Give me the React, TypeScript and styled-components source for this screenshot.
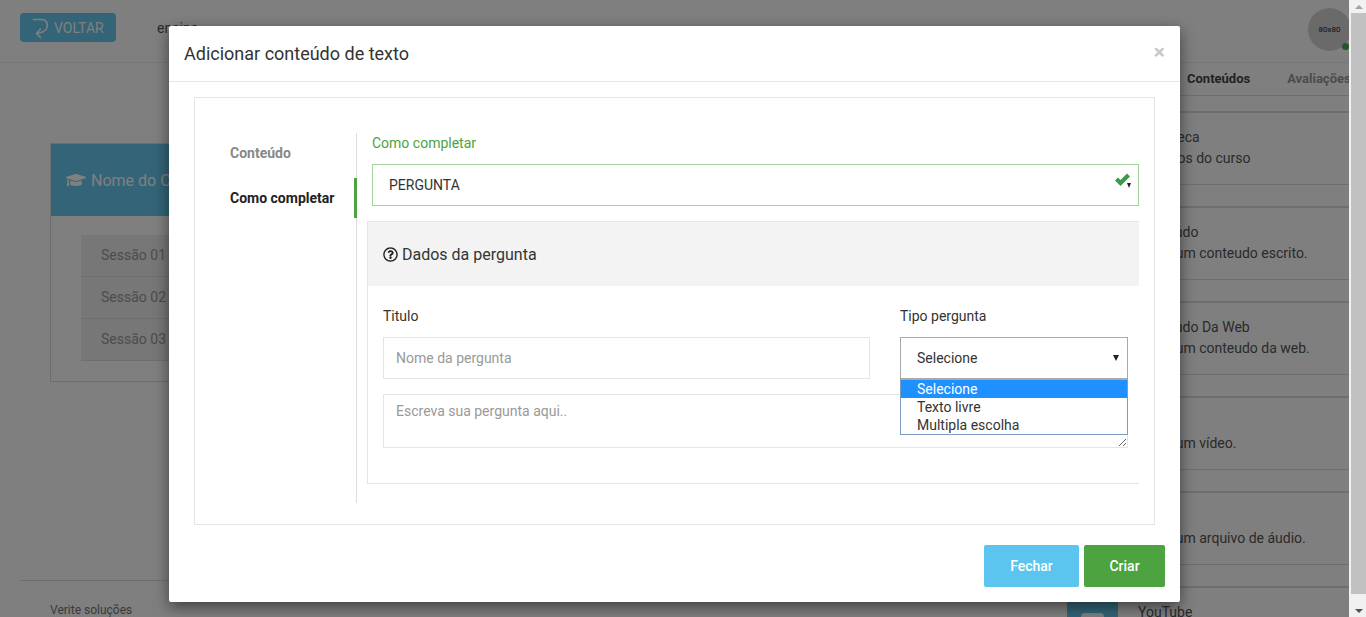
import styled, { createGlobalStyle } from "styled-components";
import { FaGraduationCap, FaRegQuestionCircle } from "react-icons/fa";

const GlobalStyle = createGlobalStyle`
  html, body {
    margin: 0;
    height: 617px;
    overflow: hidden;
    font-family: Roboto, "Liberation Sans", sans-serif;
    font-size: 14px;
    color: #333;
    background: #fff;
  }
  * { box-sizing: border-box; }
`;

const Shell = styled.div`
  display: flex;
  width: 1366px;
  height: 617px;
`;

const Viewport = styled.div`
  position: relative;
  width: 1349px;
  height: 617px;
  overflow: hidden;
`;

/* scrollbar */
const Scrollbar = styled.div`
  width: 17px;
  padding-left: 2px;
  display: flex;
  flex-direction: column;
  background: #f1f1f1;
`;

const ScrollArrow = styled.div<{ $down?: boolean }>`
  height: 13px;
  flex: none;
  display: flex;
  align-items: center;
  justify-content: center;
  &::before {
    content: "";
    border-left: 4px solid transparent;
    border-right: 4px solid transparent;
    ${props => (props.$down ? `border-top: 4px solid #505050;` : `border-bottom: 4px solid #a3a3a3;`)}
  }
`;

const ScrollThumb = styled.div`
  height: 581px;
  flex: none;
  background: #c1c1c1;
`;

const ScrollRest = styled.div`
  flex: 1;
`;

/* page under the modal */
const TopBar = styled.header`
  height: 63px;
  display: flex;
  align-items: flex-start;
  background: #fff;
  border-bottom: 1px solid #eee;
  padding: 13px 0 0 20px;
`;

const BackButton = styled.div`
  width: 96px;
  height: 29px;
  border-radius: 4px;
  background: #66c8ee;
  color: #fff;
  font-size: 14px;
  display: flex;
  align-items: center;
  gap: 4px;
  padding-left: 12px;
`;

const TopLink = styled.span`
  margin: 7px 0 0 41px;
  color: #555;
  font-size: 14px;
`;

const Avatar = styled.div`
  position: absolute;
  top: 8px;
  left: 1308px;
  width: 43px;
  height: 43px;
  border-radius: 50%;
  background: #d5d5d5;
  color: #222;
  font-size: 8px;
  display: flex;
  align-items: center;
  justify-content: center;
`;

const OnlineDot = styled.span`
  position: absolute;
  top: 35px;
  left: 34px;
  width: 7px;
  height: 7px;
  border-radius: 50%;
  background: #4caf50;
`;

const Columns = styled.div`
  display: flex;
  height: 554px;
`;

const MainColumn = styled.main`
  flex: 1;
  min-width: 0;
  display: flex;
  flex-direction: column;
  padding-top: 80px;
`;

const CourseCard = styled.section`
  margin-left: 50px;
  width: 900px;
  height: 240px;
  border: 1px solid #ddd;
`;

const CourseHead = styled.div`
  height: 72px;
  background: #66c8ee;
  color: #fff;
  font-size: 16px;
  display: flex;
  align-items: center;
  gap: 5px;
  padding-left: 15px;
`;

const SessionList = styled.ul`
  list-style: none;
  margin: 19px 0 0 30px;
  padding: 0;
`;

const SessionRow = styled.li`
  height: 42px;
  line-height: 41px;
  padding-left: 20px;
  background: #eee;
  border-bottom: 1px solid #ddd;
  color: #999;
`;

const PageFooter = styled.footer`
  margin: 198px 0 0 20px;
  border-top: 1px solid #ddd;
  padding: 22px 0 0 30px;
  font-size: 12px;
  color: #777;
`;

const SideColumn = styled.aside`
  width: 302px;
  flex: none;
`;

const SideTabs = styled.div`
  height: 33px;
  display: flex;
  gap: 37px;
  padding-left: 140px;
  white-space: nowrap;
  overflow: hidden;
  border-bottom: 1px solid #ddd;
  margin-bottom: 15px;
  font-size: 13px;
  font-weight: 700;
  line-height: 31px;
`;

const SideTab = styled.span<{ $active?: boolean }>`
  color: ${props => (props.$active ? "#444" : "#999")};
`;

const Item = styled.div`
  display: flex;
  gap: 20px;
  height: 74px;
  margin-bottom: 21px;
  padding: 14px 0 0 20px;
  border-top: 2px solid #ddd;
  border-bottom: 1px solid #ddd;
  line-height: 21px;
  color: #555;
`;

const Thumb = styled.div`
  width: 51px;
  height: 44px;
  flex: none;
  background: #66c8ee;
  display: flex;
  justify-content: center;
  padding-top: 11px;
`;

const ThumbShape = styled.div`
  width: 23px;
  height: 16px;
  border-radius: 4px;
  background: #fff;
`;

/* modal */
const Backdrop = styled.div`
  position: absolute;
  inset: 0;
  background: rgba(0, 0, 0, 0.5);
`;

const Modal = styled.div`
  position: absolute;
  top: 26px;
  left: 169px;
  width: 1011px;
  height: 576px;
  background: #fff;
  border-radius: 2px;
  box-shadow: 0 5px 15px rgba(0, 0, 0, 0.5);
`;

const ModalHead = styled.div`
  height: 56px;
  padding: 0 15px;
  display: flex;
  align-items: center;
  justify-content: space-between;
  border-bottom: 1px solid #e5e5e5;
`;

const ModalTitle = styled.h4`
  margin: 0;
  font-size: 18px;
  font-weight: 400;
  color: #333;
`;

const CloseMark = styled.span`
  font-size: 21px;
  font-weight: 700;
  color: #c8c8c8;
  margin: -3px 0 0 0;
  padding-right: 0;
`;

const ModalBody = styled.div`
  margin: 15px 25px 0;
  height: 428px;
  border: 1px solid #e5e5e5;
  padding: 35px 15px 21px 0;
  display: flex;
`;

const TabColumn = styled.nav`
  width: 162px;
  flex: none;
  border-right: 1px solid #ddd;
  display: flex;
  flex-direction: column;
  gap: 5px;
`;

const TabItem = styled.div<{ $active?: boolean }>`
  height: 40px;
  margin-right: -1px;
  padding-left: 35px;
  display: flex;
  align-items: center;
  font-weight: 700;
  font-size: 14px;
  color: ${props => (props.$active ? "#222" : "#888")};
  border-right: 3px solid ${props => (props.$active ? "#4ca340" : "transparent")};
`;

const FormColumn = styled.div`
  flex: 1;
  min-width: 0;
  padding-left: 10px;
`;

const GreenLabel = styled.div`
  margin-left: 5px;
  height: 20px;
  line-height: 20px;
  color: #4ca340;
  font-size: 14px;
`;

const ValidSelect = styled.div`
  position: relative;
  margin: 11px 0 15px 5px;
  height: 42px;
  border: 1px solid #a5d19f;
  display: flex;
  align-items: center;
  padding-left: 16px;
  color: #333;
`;

const CheckMark = styled.svg`
  position: absolute;
  top: 8px;
  right: 8px;
`;

const Caret = styled.span<{ $small?: boolean }>`
  position: absolute;
  border-left: ${props => (props.$small ? 2.5 : 3.5)}px solid transparent;
  border-right: ${props => (props.$small ? 2.5 : 3.5)}px solid transparent;
  border-top: ${props => (props.$small ? 5 : 6)}px solid #222;
  top: ${props => (props.$small ? 18 : 17)}px;
  right: ${props => (props.$small ? 7 : 8)}px;
`;

const Panel = styled.section`
  height: 263px;
  border: 1px solid #e5e5e5;
  border-right: none;
`;

const PanelHead = styled.div`
  height: 64px;
  background: #f3f3f3;
  display: flex;
  align-items: center;
  gap: 4px;
  padding-left: 15px;
  font-size: 16px;
  color: #333;
`;

const PanelBody = styled.div`
  padding: 20px 11px 0 15px;
`;

const FieldRow = styled.div`
  display: grid;
  grid-template-columns: 487px 228px;
  column-gap: 30px;
`;

const FieldLabel = styled.label`
  display: block;
  height: 20px;
  line-height: 20px;
  margin-bottom: 11px;
  color: #333;
`;

const TextInput = styled.input`
  display: block;
  width: 100%;
  height: 42px;
  border: 1px solid #e5e5e5;
  outline: none;
  padding: 0 12px;
  font: 14px Roboto, sans-serif;
  &::placeholder { color: #999; opacity: 1; }
`;

const TextArea = styled.textarea`
  display: block;
  width: 100%;
  height: 54px;
  margin-top: 15px;
  border: 1px solid #e5e5e5;
  outline: none;
  padding: 6px 12px;
  font: 14px/20px Roboto, sans-serif;
  resize: vertical;
  &::placeholder { color: #999; opacity: 1; }
`;

const SelectWrap = styled.div`
  position: relative;
`;

const SelectBox = styled.div`
  position: relative;
  height: 42px;
  border: 1px solid #aaa;
  display: flex;
  align-items: center;
  padding-left: 16px;
  color: #333;
`;

const OptionList = styled.div`
  position: absolute;
  top: 42px;
  left: 0;
  right: 0;
  z-index: 2;
  background: #fff;
  border: 1px solid #7c9cc4;
  border-top-color: #aaa;
`;

const OptionRow = styled.div<{ $selected?: boolean }>`
  height: 18px;
  line-height: 18px;
  padding-left: 16px;
  color: ${props => (props.$selected ? "#fff" : "#333")};
  background: ${props => (props.$selected ? "#1e90ff" : "#fff")};
`;

const ModalFoot = styled.div`
  display: flex;
  justify-content: flex-end;
  gap: 5px;
  padding: 20px 15px 0 0;
`;

const FootButton = styled.button<{ $tone: string; $width: number }>`
  width: ${props => props.$width}px;
  height: 42px;
  border: none;
  border-radius: 2px;
  background: ${props => props.$tone};
  color: #fff;
  font: 500 14px Roboto, sans-serif;
`;

const items = [
  { title: "Biblioteca", text: "Arquivos do curso" },
  { title: "Conteúdo", text: "Insira um conteudo escrito." },
  { title: "Conteúdo Da Web", text: "Insira um conteudo da web." },
  { title: "Vídeo", text: "Insira um vídeo." },
  { title: "Áudio", text: "Insira um arquivo de áudio." },
  { title: "YouTube", text: "Insira um vídeo do YouTube." },
];

export default function App() {
  return (
    <Shell>
      <GlobalStyle />
      <Viewport>
        <TopBar>
          <BackButton>
            <svg width="18" height="22" viewBox="0 0 18 22" fill="none" stroke="#fff" strokeWidth="1.6" strokeLinecap="round" strokeLinejoin="round">
              <path d="M1.5 2.5 H10 C17 3.5 17.5 13 9 15.5 L5 16.5" />
              <path d="M8.5 12 L4.5 16.5 L8.5 20.5" />
            </svg>
            VOLTAR
          </BackButton>
          <TopLink>ensino</TopLink>
        </TopBar>
        <Avatar>
          80x80
          <OnlineDot />
        </Avatar>
        <Columns>
          <MainColumn>
            <CourseCard>
              <CourseHead>
                <FaGraduationCap size={20} />
                Nome do Curso
              </CourseHead>
              <SessionList>
                <SessionRow>Sessão 01</SessionRow>
                <SessionRow>Sessão 02</SessionRow>
                <SessionRow>Sessão 03</SessionRow>
              </SessionList>
            </CourseCard>
            <PageFooter>Verite soluções</PageFooter>
          </MainColumn>
          <SideColumn>
            <SideTabs>
              <SideTab $active>Conteúdos</SideTab>
              <SideTab>Avaliações</SideTab>
            </SideTabs>
            {items.map(item => (
              <Item key={item.title}>
                <Thumb>
                  <ThumbShape />
                </Thumb>
                <div>
                  {item.title}
                  <br />
                  {item.text}
                </div>
              </Item>
            ))}
          </SideColumn>
        </Columns>

        <Backdrop />
        <Modal>
          <ModalHead>
            <ModalTitle>Adicionar conteúdo de texto</ModalTitle>
            <CloseMark>×</CloseMark>
          </ModalHead>
          <ModalBody>
            <TabColumn>
              <TabItem>Conteúdo</TabItem>
              <TabItem $active>Como completar</TabItem>
            </TabColumn>
            <FormColumn>
              <GreenLabel>Como completar</GreenLabel>
              <ValidSelect>
                PERGUNTA
                <CheckMark width="15" height="13" viewBox="0 0 15 13">
                  <path d="M0 7.5 L3 4.5 L5.5 7 L12 0.5 L15 3.5 L5.5 13 Z" fill="#3c9a4c" />
                </CheckMark>
                <Caret $small />
              </ValidSelect>
              <Panel>
                <PanelHead>
                  <FaRegQuestionCircle size={15} color="#222" />
                  Dados da pergunta
                </PanelHead>
                <PanelBody>
                  <FieldRow>
                    <div>
                      <FieldLabel>Titulo</FieldLabel>
                      <TextInput placeholder="Nome da pergunta" />
                    </div>
                    <div>
                      <FieldLabel>Tipo pergunta</FieldLabel>
                      <SelectWrap>
                        <SelectBox>
                          Selecione
                          <Caret />
                        </SelectBox>
                        <OptionList>
                          <OptionRow $selected>Selecione</OptionRow>
                          <OptionRow>Texto livre</OptionRow>
                          <OptionRow>Multipla escolha</OptionRow>
                        </OptionList>
                      </SelectWrap>
                    </div>
                  </FieldRow>
                  <TextArea placeholder="Escreva sua pergunta aqui.." />
                </PanelBody>
              </Panel>
            </FormColumn>
          </ModalBody>
          <ModalFoot>
            <FootButton $tone="#5bc5ef" $width={95}>Fechar</FootButton>
            <FootButton $tone="#4ca340" $width={81}>Criar</FootButton>
          </ModalFoot>
        </Modal>
      </Viewport>
      <Scrollbar>
        <ScrollArrow />
        <ScrollThumb />
        <ScrollRest />
        <ScrollArrow $down />
      </Scrollbar>
    </Shell>
  );
}
